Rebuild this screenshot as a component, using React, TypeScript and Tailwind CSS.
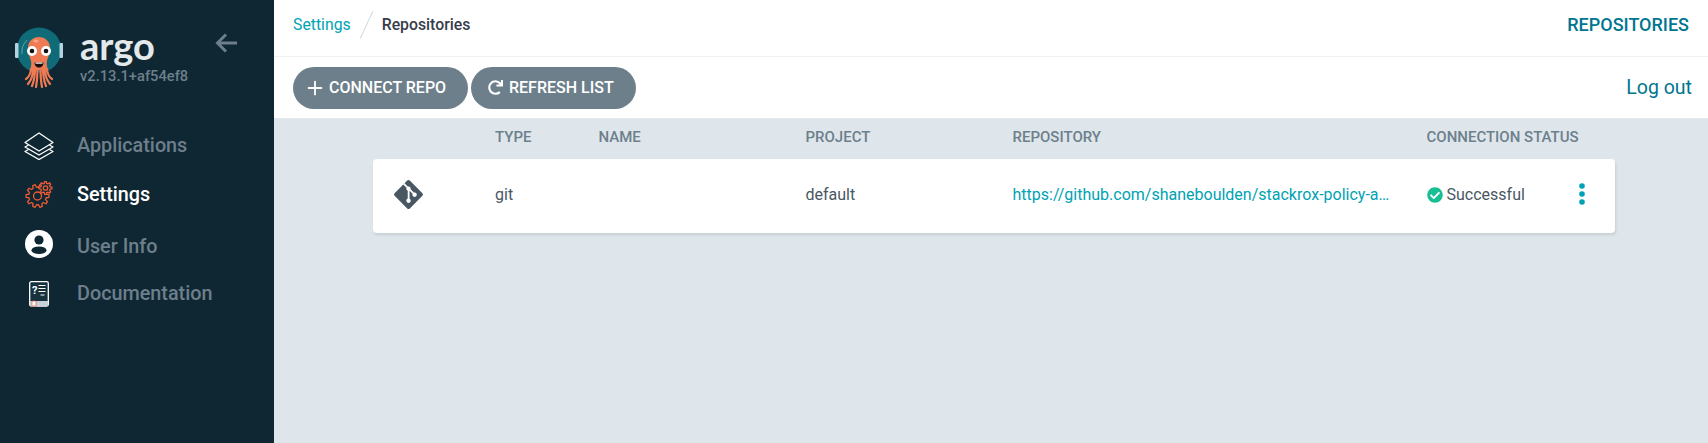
import { Plus } from "lucide-react";
import { FaCheckCircle, FaGitAlt, FaRedo } from "react-icons/fa";

const SIDEBAR_BG = "#0f2733";

// builds a gear outline, used for both cogs of the settings icon
function gearPath(cx: number, cy: number, outer: number, inner: number, teeth: number) {
  const pts: string[] = [];
  const step = (Math.PI * 2) / teeth;
  for (let i = 0; i < teeth; i++) {
    const a = i * step;
    const at = (r: number, t: number) => `${(cx + r * Math.cos(a + t * step)).toFixed(2)} ${(cy + r * Math.sin(a + t * step)).toFixed(2)}`;
    pts.push(at(inner, -0.32), at(outer, -0.18), at(outer, 0.18), at(inner, 0.32));
  }
  return `M${pts.join("L")}Z`;
}

function ArgoLogo() {
  return (
    <svg width="48" height="61" viewBox="0 0 48 61" className="shrink-0">
      <circle cx="24" cy="23" r="22.500" fill="#0f6b78" />
      <rect x="0" y="16" width="3.500" height="15" rx="1" fill="#b4d3e2" />
      <rect x="44.500" y="16" width="3.500" height="15" rx="1" fill="#b4d3e2" />
      <path d="M7 27a17 17 0 0 1 5-14" stroke="#5fa4ae" strokeWidth="1" fill="none" />
      <path d="M13 21c0-7 5-11 11-11s11 4 11 11c0 6-2 9-3 13-.7 3 0 6 1 9H15c1-3 1.700-6 1-9-1-4-3-7-3-13z" fill="#ef7b54" />
      <ellipse cx="21" cy="14" rx="2.500" ry="1.500" fill="#f7a488" />
      <path d="M16 42c-.5 5-2 8-5 10M18 42c0 6-1.500 11-5 15M20 42c0 7-1 12-3 17M22.500 42c0 7-.5 13-1.500 18M25.500 42c0 7 .5 13 1.500 18M28 42c0 7 1 12 3 17M30 42c0 6 1.500 11 5 15M32 42c.5 5 2 8 5 10" stroke="#ef7b54" strokeWidth="2.200" fill="none" strokeLinecap="round" />
      <circle cx="17" cy="24" r="5" fill="#fff" />
      <circle cx="31" cy="24" r="5" fill="#fff" />
      <circle cx="17" cy="24" r="2.300" fill="#111" />
      <circle cx="31" cy="24" r="2.300" fill="#111" />
      <path d="M19.500 35.500h9c0 3-2 5-4.500 5s-4.500-2-4.500-5z" fill="#1a1210" />
      <path d="M20.500 35.500h7v1.200h-7z" fill="#fff" />
    </svg>
  );
}

function LayersIcon() {
  return (
    <svg width="30" height="28" viewBox="0 0 30 28" fill="none" stroke="#fff" strokeWidth="1.300" strokeLinejoin="round">
      <path d="M15 1 29 10.500 15 19 1 10.500z" />
      <path d="M4.500 13 1 15 15 23 29 15 25.500 13" />
      <path d="M4.500 17.500 1 19.500 15 27.500 29 19.500 25.500 17.500" />
    </svg>
  );
}

function GearsIcon() {
  return (
    <svg width="28" height="27" viewBox="0 0 28 27" fill="none" stroke="#ef5b34" strokeWidth="1.300" strokeLinejoin="round">
      <path d={gearPath(12.500, 15, 11.500, 8.800, 10)} />
      <circle cx="12.500" cy="15" r="4" />
      <path d={gearPath(20.500, 7, 6.500, 4.700, 8)} fill={SIDEBAR_BG} />
      <circle cx="20.500" cy="7" r="2.200" />
    </svg>
  );
}

function UserIcon() {
  return (
    <svg width="28" height="28" viewBox="0 0 28 28">
      <circle cx="14" cy="14" r="14" fill="#fff" />
      <circle cx="14" cy="10" r="4.600" fill={SIDEBAR_BG} />
      <ellipse cx="14" cy="20.300" rx="7.500" ry="3.800" fill={SIDEBAR_BG} />
    </svg>
  );
}

function DocsIcon() {
  return (
    <svg width="20" height="26" viewBox="0 0 20 26" fill="none">
      <rect x=".7" y=".7" width="18.600" height="24.300" rx="1.500" fill="#16323f" stroke="#fff" strokeWidth="1.300" />
      <path d="M1 20h18v5H1z" fill="#c9d1d6" />
      <path d="M3 20h4v6l-2-1.500L3 26z" fill="#fff" stroke="#d9492f" strokeWidth=".6" />
      <path d="M9.500 4.500h7M9.500 7.500h7M9.500 10.500h7M11.500 14h4" stroke="#fff" strokeWidth="1.200" />
      <text x="3" y="13" fill="#fff" fontSize="11" fontWeight="700" fontFamily="Roboto, sans-serif">?</text>
    </svg>
  );
}

function NavItem({ icon, label, active, className }: { icon: React.ReactNode; label: string; active?: boolean; className: string }) {
  return (
    <div className={`flex items-center ${className}`}>
      <div className="flex w-[77px] justify-center">{icon}</div>
      <span className={`text-[19.800px] font-medium ${active ? "text-white" : "text-[#6d7f8b]"}`}>{label}</span>
    </div>
  );
}

const columns = [
  { label: "", span: "col-span-1" },
  { label: "TYPE", span: "col-span-1" },
  { label: "NAME", span: "col-span-2" },
  { label: "PROJECT", span: "col-span-2" },
  { label: "REPOSITORY", span: "col-span-4" },
  { label: "CONNECTION STATUS", span: "col-span-2" },
];

export default function App() {
  return (
    <div className="flex h-[443px] w-[1708px] overflow-hidden bg-[#dee6eb] font-['Roboto',sans-serif]">
      <aside className="h-full w-[274px] shrink-0 bg-[#0f2733]">
        <div className="flex items-start pl-[15px] pt-[27px]">
          <ArgoLogo />
          <div className="ml-[17px] w-[118px]">
            <div className="h-[36px] font-['Lato',sans-serif] text-[38px] leading-[36px] font-bold text-[#e4e9eb]">argo</div>
            <div className="mt-[4px] text-[14.700px] font-medium leading-[18px] text-[#6d7f8b]">v2.13.1+af54ef8</div>
          </div>
          <svg width="22" height="20" viewBox="0 0 22 20" fill="none" stroke="#6d7f8b" strokeWidth="3" className="ml-[17px] mt-[6px]">
            <path d="M22 10H3" />
            <path d="M11 1.500 2.500 10l8.500 8.500" />
          </svg>
        </div>
        <nav className="mt-[33px]">
          <NavItem className="h-[49px]" icon={<LayersIcon />} label="Applications" />
          <NavItem className="h-[49px]" icon={<GearsIcon />} label="Settings" active />
          <NavItem className="mt-[3px] h-[49px]" icon={<div className="-mt-[6px]"><UserIcon /></div>} label="User Info" />
          <NavItem className="mt-[-2px] h-[49px]" icon={<DocsIcon />} label="Documentation" />
        </nav>
      </aside>
      <main className="min-w-0 flex-1">
        <header className="flex h-[57px] items-center justify-between border-b border-[#f0f2f4] bg-white pb-[7px] pl-[19px] pr-[19px]">
          <div className="flex items-center text-[15.800px]">
            <span className="text-[#00a2b3]">Settings</span>
            <span className="mx-[15px] h-[30px] w-px rotate-[25deg] bg-[#ccd6dd]" />
            <span className="font-medium text-[#363c4a]">Repositories</span>
          </div>
          <span className="text-[18px] font-medium text-[#00758f]">REPOSITORIES</span>
        </header>
        <div className="flex h-[62px] items-center justify-between border-b border-[#e4e9ec] bg-white pl-[19px] pr-[16px]">
          <div className="flex items-center gap-[3px]">
            <button className="flex h-[42px] w-[175px] items-center gap-[3px] rounded-[21px] bg-[#6d7f8b] pl-[11px] text-[16px] font-medium text-white">
              <Plus size={22} strokeWidth={2} />
              CONNECT REPO
            </button>
            <button className="flex h-[42px] w-[165px] items-center gap-[6px] rounded-[21px] bg-[#6d7f8b] pl-[17px] text-[16px] font-medium text-white">
              <FaRedo size={15} />
              REFRESH LIST
            </button>
          </div>
          <span className="text-[19.500px] text-[#00758f]">Log out</span>
        </div>
        <section className="ml-[99px] w-[1242px]">
          <div className="grid h-[40px] grid-cols-12 items-center pb-[3px] text-[15px] font-medium text-[#6d7f8b]">
            {columns.map((col) => (
              <div key={col.label} className={`${col.span} px-[18.500px]`}>
                <span className="whitespace-nowrap">{col.label}</span>
              </div>
            ))}
          </div>
          <div className="grid h-[74px] grid-cols-12 items-center rounded-[4px] bg-white pb-[2px] text-[16px] text-[#495763] shadow-[1px_2px_3px_rgba(0,0,0,0.1)]">
            <div className="col-span-1 px-[18.500px]">
              <FaGitAlt className="-mt-[1px] text-[#495763]" size={33} />
            </div>
            <div className="col-span-1 px-[18.500px]">git</div>
            <div className="col-span-2 px-[18.500px]" />
            <div className="col-span-2 px-[18.500px]">default</div>
            <div className="col-span-4 truncate px-[18.500px] text-[#00a2b3]">https://github.com/shaneboulden/stackrox-policy-as-code</div>
            <div className="col-span-2 flex items-center justify-between pl-[18.500px] pr-[29px]">
              <span className="flex items-center gap-[4px]">
                <FaCheckCircle className="text-[#18be94]" size={16} />
                Successful
              </span>
              <svg width="8" height="22" viewBox="0 0 8 22" fill="#00a2b3" className="-mt-[2px]">
                <circle cx="4" cy="3" r="2.800" />
                <circle cx="4" cy="11" r="2.800" />
                <circle cx="4" cy="19" r="2.800" />
              </svg>
            </div>
          </div>
        </section>
      </main>
    </div>
  );
}
